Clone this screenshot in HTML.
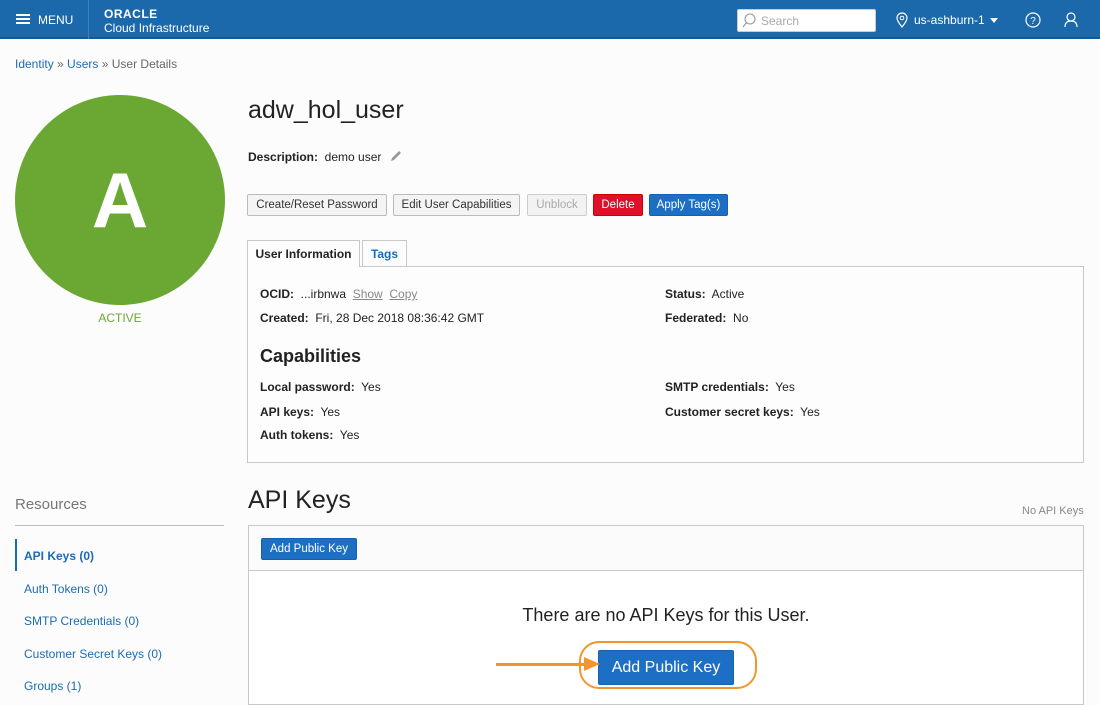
<!DOCTYPE html>
<html><head><meta charset="utf-8"><style>
*{box-sizing:border-box;margin:0;padding:0}
body{width:1100px;height:694px;overflow:hidden;background:#fcfcfc;font-family:"Liberation Sans",Arial,sans-serif;color:#222;position:relative;font-size:12px}
.a{position:absolute}
.hdr{left:0;top:0;width:1100px;height:39px;background:#1b69ab;border-bottom:2px solid #155a94;color:#fff}
a,.lnk{color:#1c6bb5;text-decoration:none}
.btn{position:absolute;top:194px;height:22px;border:1px solid #bbb;background:#f4f4f4;border-radius:2px;font-size:11.5px;line-height:20px;text-align:center;color:#333;white-space:nowrap}
.b{font-weight:bold}
</style></head><body>
<div class="a hdr">
  <div class="a" style="left:16px;top:14px;width:14px;height:2px;background:#fff;box-shadow:0 4px 0 #fff,0 8px 0 #fff"></div>
  <div class="a" style="left:38px;top:13px;font-size:12px">MENU</div>
  <div class="a" style="left:88px;top:0;width:1px;height:39px;background:#3c82bd"></div>
  <div class="a" style="left:104px;top:7px;font-size:12px;font-weight:bold;letter-spacing:0.5px">ORACLE</div>
  <div class="a" style="left:104px;top:21px;font-size:12px">Cloud Infrastructure</div>
  <div class="a" style="left:737px;top:9px;width:139px;height:23px;background:#fff;border:1px solid #ccc;border-radius:2px"></div>
  <svg class="a" style="left:742px;top:13px" width="14" height="15"><circle cx="8" cy="6" r="5" fill="none" stroke="#999" stroke-width="1.1"/><line x1="4.5" y1="9.5" x2="1" y2="14" stroke="#999" stroke-width="1.1"/></svg>
  <div class="a" style="left:761px;top:14px;color:#aaa;font-size:12px">Search</div>
  <svg class="a" style="left:896px;top:12px" width="12" height="16"><path d="M6 15C2 10 1 8 1 6a5 5 0 0 1 10 0c0 2-1 4-5 9z" fill="none" stroke="#fff" stroke-width="1.2"/><circle cx="6" cy="6" r="1.8" fill="none" stroke="#fff"/></svg>
  <div class="a" style="left:914px;top:13px;font-size:12px">us-ashburn-1</div>
  <div class="a" style="left:990px;top:18px;border-left:4px solid transparent;border-right:4px solid transparent;border-top:5px solid #fff"></div>
  <svg class="a" style="left:1025px;top:12px" width="16" height="16"><circle cx="8" cy="8" r="7" fill="none" stroke="#fff" stroke-width="1.2"/><text x="8" y="12" text-anchor="middle" font-size="10" fill="#fff" font-family="Liberation Sans">?</text></svg>
  <svg class="a" style="left:1064px;top:12px" width="14" height="16"><circle cx="7" cy="5" r="4" fill="none" stroke="#fff" stroke-width="1.2"/><path d="M1 15c0-5 3-6 6-6s6 1 6 6" fill="none" stroke="#fff" stroke-width="1.2"/></svg>
</div>
<div class="a" style="left:15px;top:57px;font-size:12px;color:#666"><a>Identity</a> » <a>Users</a> » User Details</div>
<div class="a" style="left:15px;top:95px;width:210px;height:210px;border-radius:50%;background:#6aa833;color:#fff;font-size:78px;font-weight:bold;text-align:center;line-height:210px">A</div>
<div class="a" style="left:0;top:311px;width:240px;text-align:center;color:#6aa833;font-size:12px">ACTIVE</div>
<div class="a" style="left:248px;top:96px;font-size:25px;color:#222">adw_hol_user</div>
<div class="a" style="left:248px;top:150px"><span class="b">Description:</span>&nbsp; demo user</div>
<svg class="a" style="left:389px;top:149px" width="14" height="14"><path d="M2 12l1-3 7-7 2 2-7 7z" fill="#999"/></svg>
<div class="btn" style="left:247px;width:140px">Create/Reset Password</div>
<div class="btn" style="left:393px;width:127px">Edit User Capabilities</div>
<div class="btn" style="left:527px;width:60px;color:#aaa;background:#f2f2f2;border-color:#ccc">Unblock</div>
<div class="btn" style="left:593px;width:50px;background:#e0102a;border-color:#c00;color:#fff">Delete</div>
<div class="btn" style="left:649px;width:79px;background:#1d6fc4;border-color:#1760ad;color:#fff">Apply Tag(s)</div>
<div class="a" style="left:247px;top:266px;width:837px;height:197px;border:1px solid #c8c8c8;background:#fdfdfd"></div>
<div class="a" style="left:247px;top:240px;width:113px;height:27px;border:1px solid #c8c8c8;border-bottom:none;background:#fdfdfd;text-align:center;line-height:26px;font-weight:bold;font-size:12px">User Information</div>
<div class="a" style="left:362px;top:240px;width:45px;height:26px;border:1px solid #c8c8c8;border-bottom:none;text-align:center;line-height:26px;font-weight:bold;color:#1c6bb5">Tags</div>
<div class="a" style="left:260px;top:287px"><span class="b">OCID:</span>&nbsp; ...irbnwa&nbsp; <u style="color:#888">Show</u>&nbsp; <u style="color:#888">Copy</u></div>
<div class="a" style="left:260px;top:311px"><span class="b">Created:</span>&nbsp; Fri, 28 Dec 2018 08:36:42 GMT</div>
<div class="a" style="left:665px;top:287px"><span class="b">Status:</span>&nbsp; Active</div>
<div class="a" style="left:665px;top:311px"><span class="b">Federated:</span>&nbsp; No</div>
<div class="a" style="left:260px;top:346px;font-size:18px;font-weight:bold">Capabilities</div>
<div class="a" style="left:260px;top:380px"><span class="b">Local password:</span>&nbsp; Yes</div>
<div class="a" style="left:260px;top:405px"><span class="b">API keys:</span>&nbsp; Yes</div>
<div class="a" style="left:260px;top:428px"><span class="b">Auth tokens:</span>&nbsp; Yes</div>
<div class="a" style="left:665px;top:380px"><span class="b">SMTP credentials:</span>&nbsp; Yes</div>
<div class="a" style="left:665px;top:405px"><span class="b">Customer secret keys:</span>&nbsp; Yes</div>
<div class="a" style="left:15px;top:496px;font-size:15px;color:#777">Resources</div>
<div class="a" style="left:15px;top:525px;width:209px;height:1px;background:#bbb"></div>
<div class="a" style="left:15px;top:539px;width:2px;height:32px;background:#1c6bb5"></div>
<div class="a lnk b" style="left:24px;top:549px">API Keys (0)</div>
<div class="a lnk" style="left:24px;top:582px">Auth Tokens (0)</div>
<div class="a lnk" style="left:24px;top:614px">SMTP Credentials (0)</div>
<div class="a lnk" style="left:24px;top:647px">Customer Secret Keys (0)</div>
<div class="a lnk" style="left:24px;top:679px">Groups (1)</div>
<div class="a" style="left:248px;top:486px;font-size:25px">API Keys</div>
<div class="a" style="left:1022px;top:505px;font-size:11px;color:#888">No API Keys</div>
<div class="a" style="left:248px;top:525px;width:836px;height:180px;border:1px solid #c8c8c8;background:#fff"></div>
<div class="a" style="left:248px;top:525px;width:836px;height:46px;border:1px solid #c8c8c8;background:#fbfbfb"></div>
<div class="btn" style="left:261px;top:538px;width:96px;background:#1d6fc4;border-color:#1760ad;color:#fff">Add Public Key</div>
<div class="a" style="left:248px;top:605px;width:836px;text-align:center;font-size:18px;color:#222">There are no API Keys for this User.</div>
<div class="a" style="left:579px;top:641px;width:178px;height:48px;border:2.5px solid #f2952a;border-radius:20px"></div>
<div class="a" style="left:598px;top:650px;width:136px;height:35px;background:#1d6fc4;border:1px solid #1760ad;border-radius:2px;color:#fff;font-size:16px;text-align:center;line-height:33px">Add Public Key</div>
<div class="a" style="left:496px;top:663px;width:92px;height:2.5px;background:#f2952a"></div>
<div class="a" style="left:584px;top:657px;border-top:7px solid transparent;border-bottom:7px solid transparent;border-left:16px solid #f2952a"></div>
</body></html>
